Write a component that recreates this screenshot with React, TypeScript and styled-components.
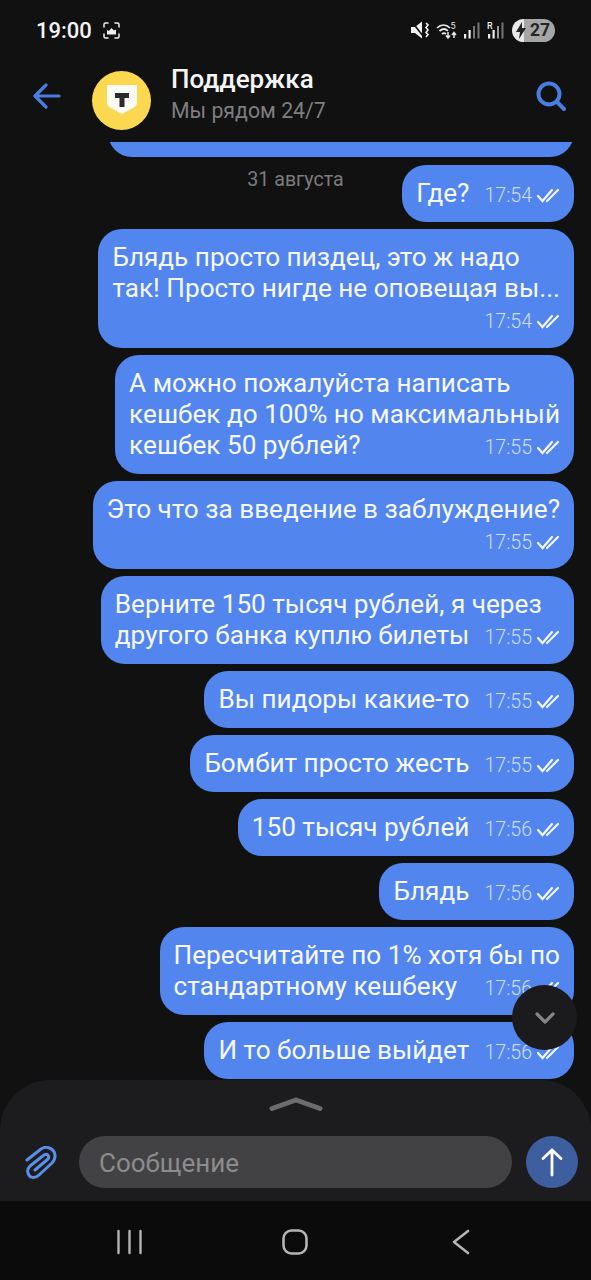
import React from "react";
import styled, { createGlobalStyle } from "styled-components";

const Global = createGlobalStyle`
  html, body { margin: 0; padding: 0; background: #111112; }
  * { box-sizing: border-box; }
  body { font-family: Roboto, "Noto Sans", sans-serif; }
`;

const Page = styled.div`
  width: 591px;
  height: 1280px;
  display: flex;
  flex-direction: column;
  background: #111112;
  overflow: hidden;
`;

const StatusBar = styled.div`
  height: 58px;
  flex: none;
  display: flex;
  align-items: center;
  justify-content: space-between;
  padding: 2px 36px 0 36px;
  color: #f4f4f4;
`;
const StatusLeft = styled.div`
  display: flex;
  align-items: center;
  gap: 11px;
`;
const Clock = styled.span`
  font-size: 22px;
  font-weight: 500;
`;
const StatusRight = styled.div`
  display: flex;
  align-items: center;
  gap: 7px;
`;
const Battery = styled.div`
  width: 43px;
  height: 23px;
  border-radius: 12px;
  margin-left: 1px;
  display: flex;
  align-items: center;
  padding-left: 4px;
  gap: 4px;
  color: #262626;
  font-size: 17.5px;
  font-weight: 700;
  background: linear-gradient(90deg, #e8e8e8 0 12px, #a6a6a6 12px);
`;

const Header = styled.header`
  height: 84px;
  flex: none;
  display: flex;
  align-items: center;
  padding: 0 25px 0 33px;
`;
const BackButton = styled.div`
  display: flex;
  width: 59px;
  flex: none;
  margin-top: -8px;
`;
const SearchButton = styled.div`
  display: flex;
  flex: none;
  margin-top: -8px;
`;
const Avatar = styled.div`
  width: 59px;
  height: 59px;
  border-radius: 50%;
  background: #fbd84f;
  display: flex;
  align-items: center;
  justify-content: center;
  flex: none;
`;
const TitleBlock = styled.div`
  flex: 1;
  margin-left: 20px;
  display: flex;
  flex-direction: column;
  gap: 2px;
  margin-top: -10px;
`;
const Title = styled.div`
  font-size: 26px;
  font-weight: 500;
  line-height: 30px;
  color: #f5f5f5;
`;
const Subtitle = styled.div`
  font-size: 21.3px;
  line-height: 30px;
  color: #7e7e80;
`;

const Main = styled.main`
  position: relative;
  flex: 1;
  overflow: hidden;
`;
const List = styled.div`
  display: flex;
  flex-direction: column;
  align-items: flex-end;
  gap: 7.05px;
  padding-right: 17px;
`;
const Bubble = styled.div`
  background: #5286ee;
  color: #f6f8fe;
  border-radius: 24px;
  padding: 13px 14px;
  font-size: 26.15px;
  line-height: 31px;
  white-space: nowrap;
`;
const ClippedBubble = styled(Bubble)`
  width: 466px;
  height: 57px;
  margin-top: -41.55px;
`;
const NextBubble = styled(Bubble)`
  width: 300px;
  height: 57px;
`;
const LastLine = styled.div`
  display: flex;
  justify-content: space-between;
  align-items: flex-end;
  gap: 15px;
`;
const MetaRow = styled.div`
  display: flex;
  justify-content: flex-end;
`;
const Meta = styled.span`
  display: inline-flex;
  align-items: center;
  gap: 4px;
  height: 31px;
  padding-top: 5px;
  font-size: 19.6px;
  font-weight: 300;
  color: #cfdefb;
`;
const DateLabel = styled.div`
  position: absolute;
  top: 26px;
  left: 0;
  width: 591px;
  text-align: center;
  font-size: 19.6px;
  line-height: 24px;
  color: #7c7c7f;
`;
const Fab = styled.div`
  position: absolute;
  left: 512px;
  top: 843px;
  width: 65px;
  height: 65px;
  border-radius: 50%;
  background: #1b1b1d;
  display: flex;
  align-items: center;
  justify-content: center;
`;
const Composer = styled.div`
  position: absolute;
  left: 0;
  right: 0;
  bottom: 0;
  height: 121px;
  background: #1c1c1e;
  border-radius: 50px 50px 0 0;
  padding: 16px 13px 13px 25px;
  display: flex;
  flex-direction: column;
`;
const Handle = styled.div`
  display: flex;
  justify-content: center;
  margin: 0 -13px 0 -25px;
  height: 40px;
`;
const InputRow = styled.div`
  display: flex;
  align-items: center;
`;
const Attach = styled.div`
  display: flex;
  width: 54px;
  flex: none;
  margin-top: 2px;
`;
const Input = styled.div`
  width: 433px;
  height: 52px;
  border-radius: 26px;
  background: #424244;
  padding: 2px 20px 0;
  display: flex;
  align-items: center;
  font-size: 26px;
  color: #8c8c8e;
`;
const Send = styled.div`
  width: 52px;
  height: 52px;
  margin-left: 14px;
  border-radius: 50%;
  background: #3d5e9f;
  display: flex;
  align-items: center;
  justify-content: center;
  flex: none;
`;
const NavBar = styled.nav`
  height: 79px;
  flex: none;
  background: #0b0b0c;
  display: grid;
  grid-template-columns: 117px 165px 170px 1fr;
  align-items: center;
`;
const NavSlot = styled.div`
  grid-column: ${(p: { $col: number }) => p.$col};
  display: flex;
  margin-top: 3px;
`;

const Check = () => (
  <svg width="24" height="15" viewBox="0 0 24 15" fill="none" stroke="#f2f6ff" strokeWidth="2.2" strokeLinecap="round">
    <path d="M2 8l4.500 5L16 2" />
    <path d="M11 13L22 2" />
  </svg>
);

const TimeMeta = ({ t }: { t: string }) => (
  <Meta>
    {t}
    <Check />
  </Meta>
);

const Msg = ({ lines, time, own }: { lines: string[]; time: string; own?: boolean }) => {
  const head = own ? lines : lines.slice(0, -1);
  const last = lines[lines.length - 1];
  return (
    <Bubble>
      {head.map((l) => (
        <div key={l}>{l}</div>
      ))}
      {own ? (
        <MetaRow>
          <TimeMeta t={time} />
        </MetaRow>
      ) : (
        <LastLine>
          <span>{last}</span>
          <TimeMeta t={time} />
        </LastLine>
      )}
    </Bubble>
  );
};

const messages: { lines: string[]; time: string; own?: boolean }[] = [
  { lines: ["Где?"], time: "17:54" },
  { lines: ["Блядь просто пиздец, это ж надо", "так! Просто нигде не оповещая вы..."], time: "17:54", own: true },
  { lines: ["А можно пожалуйста написать", "кешбек до 100% но максимальный", "кешбек 50 рублей?"], time: "17:55" },
  { lines: ["Это что за введение в заблуждение?"], time: "17:55", own: true },
  { lines: ["Верните 150 тысяч рублей, я через", "другого банка куплю билеты"], time: "17:55" },
  { lines: ["Вы пидоры какие-то"], time: "17:55" },
  { lines: ["Бомбит просто жесть"], time: "17:55" },
  { lines: ["150 тысяч рублей"], time: "17:56" },
  { lines: ["Блядь"], time: "17:56" },
  { lines: ["Пересчитайте по 1% хотя бы по", "стандартному кешбеку"], time: "17:56" },
  { lines: ["И то больше выйдет"], time: "17:56" },
];

export default function App() {
  return (
    <Page>
      <Global />
      <StatusBar>
        <StatusLeft>
          <Clock>19:00</Clock>
          <svg width="17" height="17" viewBox="0 0 17 17" fill="none" stroke="#eee" strokeWidth="1.5" strokeLinecap="round">
            <path d="M1 5V2.500A1.500 1.500 0 0 1 2.500 1H5M12 1h2.500A1.500 1.500 0 0 1 16 2.500V5M16 12v2.500a1.500 1.500 0 0 1-1.500 1.500H12M5 16H2.500A1.500 1.500 0 0 1 1 14.500V12" />
            <path d="M4 12.500V8l2 1 2.500-3L11 8.500l2-1v5z" fill="#eee" stroke="none" />
          </svg>
        </StatusLeft>
        <StatusRight>
          <svg width="18" height="18" viewBox="0 0 18 18" fill="#f2f2f2">
            <path d="M0 6h4l7-5.500v17L4 12H0z" />
            <path d="M1 1l11 14" stroke="#111112" strokeWidth="1.6" />
            <path d="M15 2l2 2-2 2.500 2 2.500-2 2.500 2 2-2 2.500" stroke="#f2f2f2" strokeWidth="1.6" fill="none" />
          </svg>
          <svg width="21" height="18" viewBox="0 0 21 18" fill="none" stroke="#e8e8e8" strokeWidth="1.7">
            <path d="M1 7c4-4 9-4 13 0M3.500 10c3-2.600 6-2.600 8.500 0M6 13c1.500-1.300 2.500-1.300 4 0" />
            <text x="14.500" y="8" fontSize="9" fontFamily="Roboto" fill="#e8e8e8" stroke="none">5</text>
            <path d="M12 11v6M10 14.500l2 2.500 2-2.500M18 17v-5M16 14l2-2.500 2 2.500" strokeWidth="1.500" />
          </svg>
          <svg width="16" height="18" viewBox="0 0 16 18" fill="#777">
            <rect x="0" y="13" width="2.200" height="4.500" fill="#ededed" />
            <rect x="4.500" y="9" width="2.200" height="8.500" fill="#ededed" />
            <rect x="9" y="5" width="2" height="12.500" />
            <rect x="13.500" y="1.500" width="2" height="16" />
          </svg>
          <svg width="17" height="18" viewBox="0 0 17 18" fill="#ededed">
            <text x="0" y="8" fontSize="9" fontFamily="Roboto" fontWeight="500">R</text>
            <rect x="1" y="13" width="2.200" height="4.500" />
            <rect x="5.500" y="9" width="2.200" height="8.500" />
            <rect x="10" y="5" width="2" height="12.500" fill="#9a9a9a" />
            <rect x="14.500" y="1.500" width="2" height="16" fill="#777" />
          </svg>
          <Battery>
            <svg width="10" height="17" viewBox="0 0 10 17" fill="#222">
              <path d="M6 0L0 10h4l-1 7 7-11H6z" />
            </svg>
            27
          </Battery>
        </StatusRight>
      </StatusBar>

      <Header>
        <BackButton>
          <svg width="28" height="26" viewBox="0 0 28 26" fill="none" stroke="#4a7de0" strokeWidth="3.2" strokeLinecap="round" strokeLinejoin="round">
            <path d="M26 13H2M13 2L2 13l11 11" />
          </svg>
        </BackButton>
        <Avatar>
          <svg width="36" height="32" viewBox="0 0 36 32">
            <path d="M3 1h30v17c0 3-1 4.500-4 6l-11 6-11-6c-3-1.500-4-3-4-6z" fill="#fbfbf6" />
            <path d="M11 9h14v5h-4.500v9h-5v-9H11z" fill="#2b2b2b" />
          </svg>
        </Avatar>
        <TitleBlock>
          <Title>Поддержка</Title>
          <Subtitle>Мы рядом 24/7</Subtitle>
        </TitleBlock>
        <SearchButton>
          <svg width="30" height="30" viewBox="0 0 30 30" fill="none" stroke="#4a7de0" strokeWidth="4" strokeLinecap="round">
            <circle cx="13" cy="13" r="10.500" />
            <path d="M21 21l7 7" />
          </svg>
        </SearchButton>
      </Header>

      <Main>
        <List>
          <ClippedBubble />
          {messages.map((m) => (
            <Msg key={m.lines[0]} {...m} />
          ))}
          <NextBubble />
        </List>
        <DateLabel>31 августа</DateLabel>
        <Fab>
          <svg width="22" height="14" viewBox="0 0 22 14" fill="none" stroke="#858587" strokeWidth="3.2" strokeLinecap="round" strokeLinejoin="round">
            <path d="M3 3l8 8 8-8" />
          </svg>
        </Fab>
        <Composer>
          <Handle>
            <svg width="54" height="16" viewBox="0 0 54 16" fill="none" stroke="#6c6c6e" strokeWidth="5" strokeLinecap="round" strokeLinejoin="round">
              <path d="M3 12.500L27 4l24 8.500" />
            </svg>
          </Handle>
          <InputRow>
            <Attach>
              <svg width="32" height="34" viewBox="0 0 32 34" fill="none" stroke="#5a8ee8" strokeWidth="3" strokeLinecap="round" strokeLinejoin="round">
                <path d="M2 14L16 3C22-1 30 3 30 10c0 3-1 5-3 7L14 29c-4 4-10 3-11-2-1-3 0-5 2-7L19 9c3-2 6 1 4 4L10 24" />
              </svg>
            </Attach>
            <Input>Сообщение</Input>
            <Send>
              <svg width="24" height="30" viewBox="0 0 24 30" fill="none" stroke="#fff" strokeWidth="2.8" strokeLinecap="round" strokeLinejoin="round">
                <path d="M12 28V3M3 11.500L12 3l9 8.500" />
              </svg>
            </Send>
          </InputRow>
        </Composer>
      </Main>

      <NavBar>
        <NavSlot $col={2}>
          <svg width="26" height="26" viewBox="0 0 26 26" fill="none" stroke="#b4b4b4" strokeWidth="2.4" strokeLinecap="round">
            <path d="M1.500 2v22M12.500 2v22M23.500 2v22" />
          </svg>
        </NavSlot>
        <NavSlot $col={3}>
          <svg width="26" height="26" viewBox="0 0 26 26" fill="none" stroke="#b4b4b4" strokeWidth="2.6">
            <rect x="1.500" y="1.500" width="23" height="23" rx="8" />
          </svg>
        </NavSlot>
        <NavSlot $col={4}>
          <svg width="18" height="26" viewBox="0 0 18 26" fill="none" stroke="#b4b4b4" strokeWidth="2.6" strokeLinecap="round" strokeLinejoin="round">
            <path d="M16 2L2 13l14 11" />
          </svg>
        </NavSlot>
      </NavBar>
    </Page>
  );
}
